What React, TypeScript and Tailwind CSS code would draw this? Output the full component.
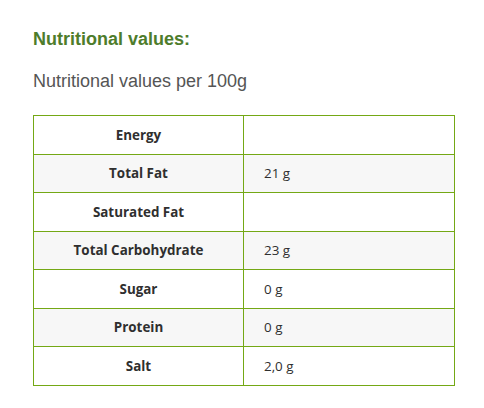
const rows: [string, string][] = [
  ['Energy', ''],
  ['Total Fat', '21 g'],
  ['Saturated Fat', ''],
  ['Total Carbohydrate', '23 g'],
  ['Sugar', '0 g'],
  ['Protein', '0 g'],
  ['Salt', '2,0 g'],
];

export default function App() {
  return (
    <div className="min-h-screen bg-white px-[33px] pt-[28px]" style={{ fontFamily: '"Liberation Sans", Arial, sans-serif' }}>
      <h2 className="text-[18px] font-bold leading-[22px] text-[#4e7c2b]">Nutritional values:</h2>
      <p className="mt-[20px] text-[18px] leading-[22px] text-[#555555]">Nutritional values per 100g</p>

      <table
        className="mt-[23px] w-[422px] border-collapse text-[13.4px] text-[#2f2f2f]"
        style={{ fontFamily: '"Open Sans", sans-serif' }}
      >
        <tbody>
          {rows.map(([label, value], i) => (
            <tr key={label} className={i % 2 === 1 ? 'bg-[#f7f7f7]' : 'bg-white'}>
              <td className="h-[38.5px] w-[210px] border border-[#74a815] text-center font-bold">{label}</td>
              <td className="h-[38.5px] border border-[#74a815] pl-[20px]">{value}</td>
            </tr>
          ))}
        </tbody>
      </table>
    </div>
  );
}
